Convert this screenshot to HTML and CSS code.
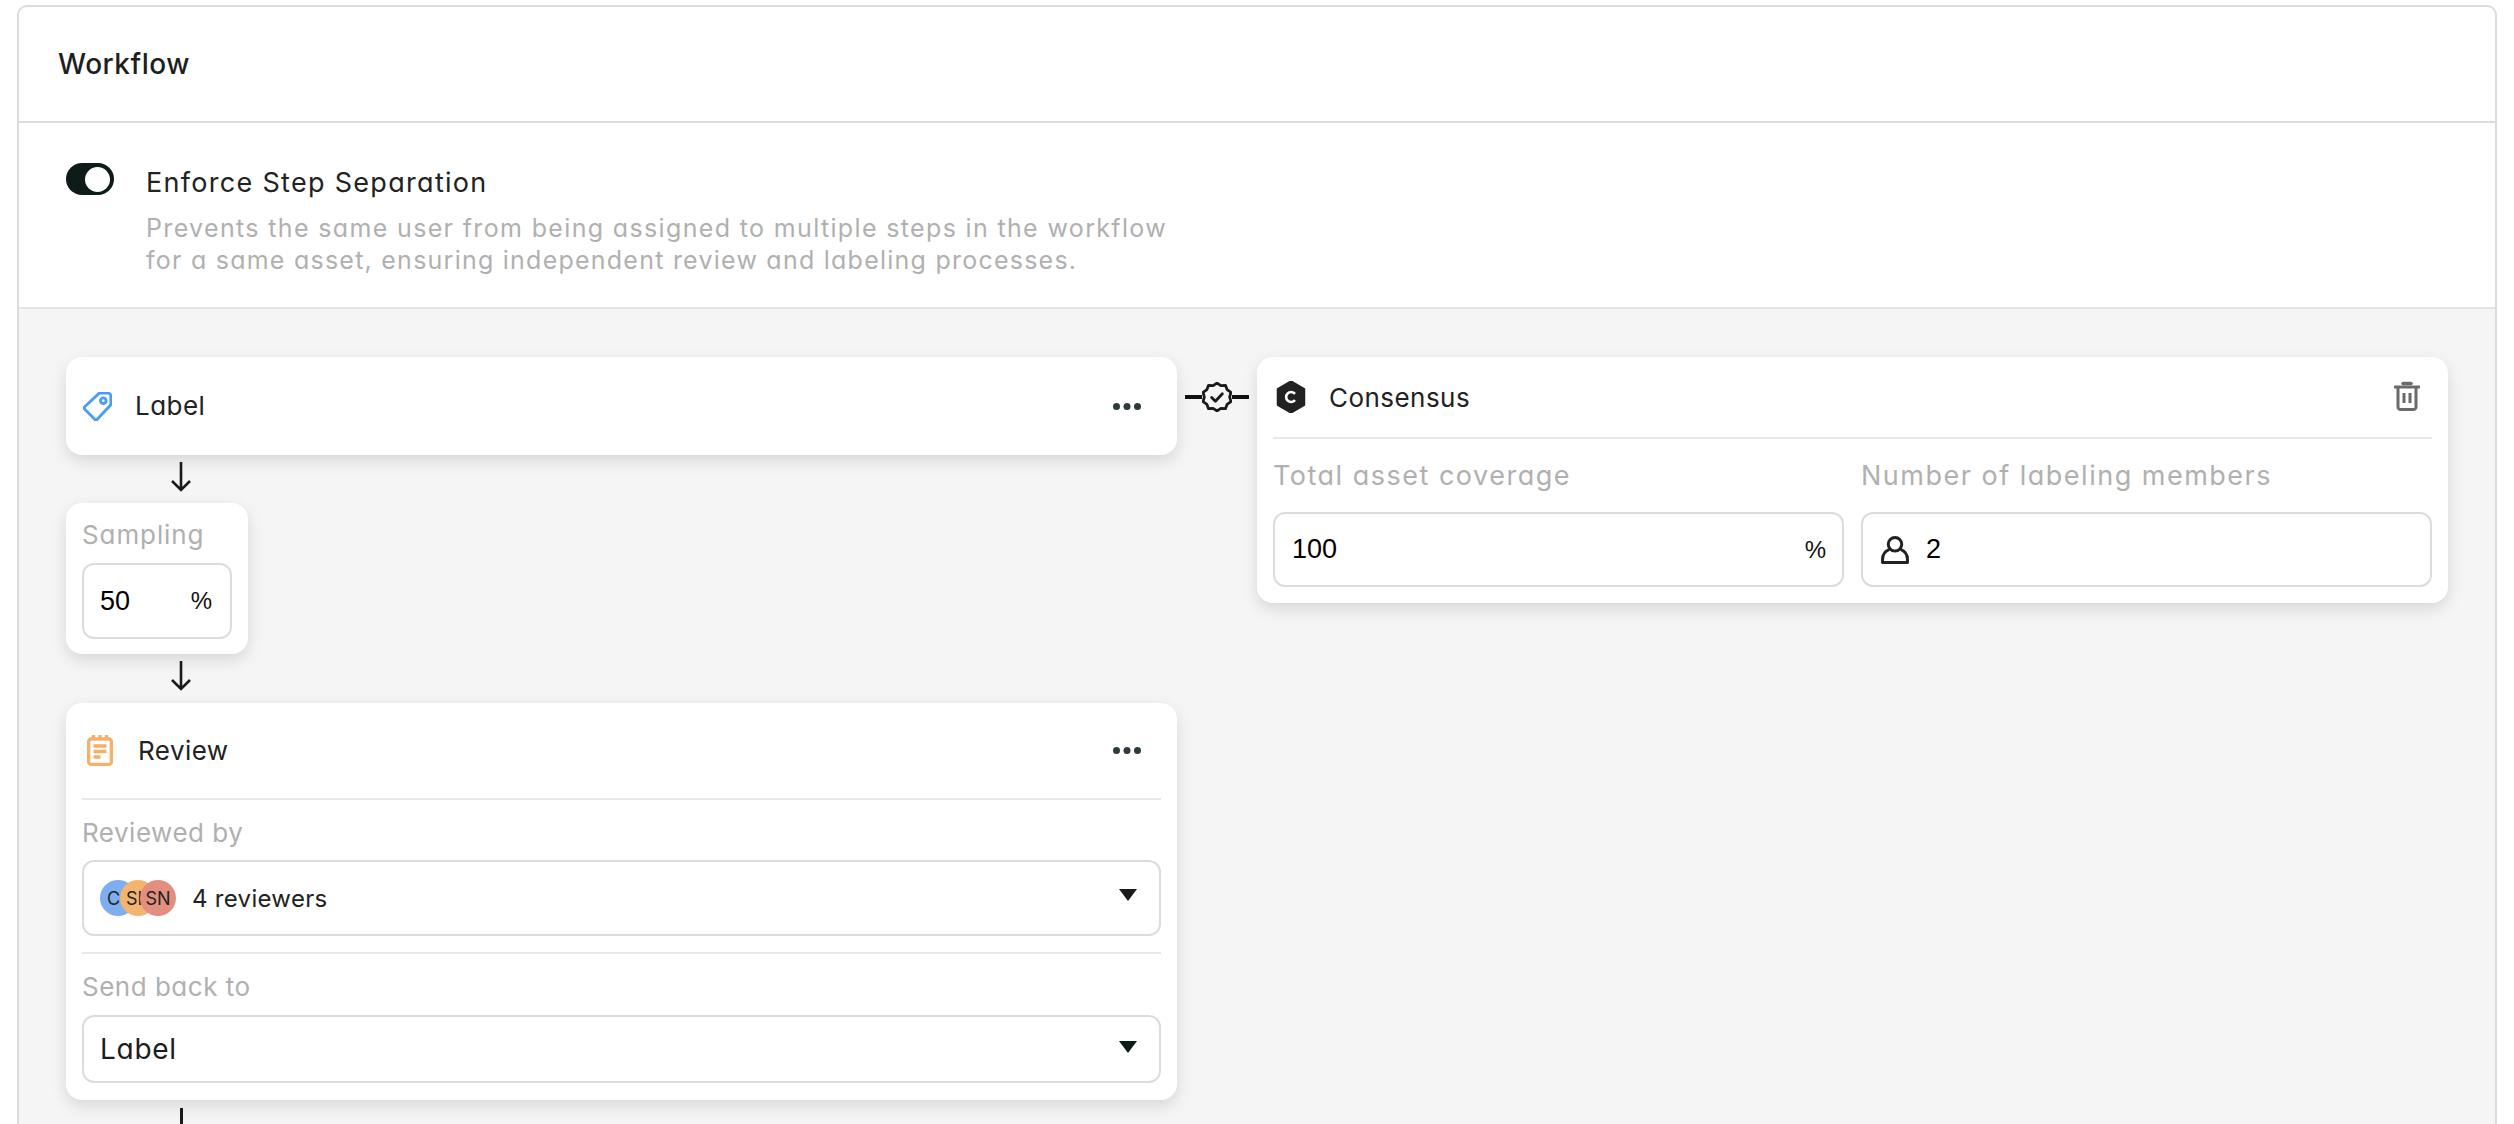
FILE: index.html
```html
<!DOCTYPE html>
<html lang="en">
<head>
<meta charset="utf-8">
<title>Workflow</title>
<link rel="stylesheet" href="styles.css">
</head>
<body>
<section class="panel">
  <header class="panel-head">Workflow</header>
  <div class="separation">
    <span class="toggle"><span class="knob"></span></span>
    <div class="sep-text">
      <div class="sep-title">Enforce Step Separation</div>
      <p class="sep-desc">Prevents the same user from being assigned to multiple steps in the workflow<br><span class="sep-line">for a same asset, ensuring independent review and labeling processes.</span></p>
    </div>
  </div>
  <div class="canvas">
    <div class="col-left">
      <div class="card step-label">
        <svg class="icon-tag" viewBox="1.500 1.500 25 25" width="29" height="29" fill="none" stroke="#4a9df5" stroke-width="2.500" stroke-linejoin="round"><path d="M15.500 2.500h7.500a2.500 2.500 0 0 1 2.500 2.500v7.500L13.800 25a1.500 1.500 0 0 1-2.200 0L3 16.400a1.500 1.500 0 0 1 0-2.200z"/><circle cx="19" cy="9" r="2.400"/></svg>
        <span class="step-name">Label</span>
        <svg class="dots" viewBox="0 0 28 7" width="28" height="7" fill="#2f3a3d"><circle cx="3.500" cy="3.500" r="3.500"/><circle cx="14" cy="3.500" r="3.500"/><circle cx="24.500" cy="3.500" r="3.500"/></svg>
      </div>
      <svg class="arrow" viewBox="0 0 24 30" width="24" height="30" fill="none" stroke="#1a1a1a" stroke-width="2.600"><path d="M12 0v28M3 19l9 9 9-9"/></svg>
      <div class="card sampling">
        <div class="field-label field-sampling">Sampling</div>
        <div class="input input-small"><span class="value">50</span><span class="unit">%</span></div>
      </div>
      <svg class="arrow arrow-low" viewBox="0 0 24 30" width="24" height="30" fill="none" stroke="#1a1a1a" stroke-width="2.600"><path d="M12 0v28M3 19l9 9 9-9"/></svg>
      <div class="card review">
        <div class="review-head">
          <svg class="icon-note" viewBox="0 0 26 31" width="26" height="31" fill="none" stroke="#f5b06c" stroke-width="3.300"><rect x="1.650" y="4" width="22.700" height="25.350" rx="2.500"/><path d="M6.500 0v5M13 0v5M19.500 0v5M6.500 11h13M6.500 16.500h13M6.500 22h7"/></svg>
          <span class="step-name">Review</span>
          <svg class="dots" viewBox="0 0 28 7" width="28" height="7" fill="#2f3a3d"><circle cx="3.500" cy="3.500" r="3.500"/><circle cx="14" cy="3.500" r="3.500"/><circle cx="24.500" cy="3.500" r="3.500"/></svg>
        </div>
        <div class="review-block">
          <div class="field-label">Reviewed by</div>
          <div class="input select select-tall">
            <span class="avatars">
              <span class="avatar av-blue">C</span>
              <span class="avatar av-orange">SI</span>
              <span class="avatar av-red">SN</span>
            </span>
            <span class="reviewers">4 reviewers</span>
            <span class="caret"></span>
          </div>
        </div>
        <div class="review-block">
          <div class="field-label">Send back to</div>
          <div class="input select select-short">
            <span class="select-value">Label</span>
            <span class="caret caret-short"></span>
          </div>
        </div>
      </div>
      <div class="arrow-stub"></div>
    </div>
    <div class="connector">
      <span class="dash"></span>
      <svg viewBox="1 1 28 28" width="30" height="30" fill="none" stroke="#1a1a1a" stroke-width="2.600" stroke-linejoin="round" stroke-linecap="round"><path d="M15 2l3.600 2.400 4.300-.3 1.500 4 3.600 2.500-1.200 4.400 1.200 4.400-3.600 2.500-1.500 4-4.300-.3L15 28l-3.600-2.400-4.300.3-1.500-4-3.600-2.500 1.200-4.400L2 10.600l3.600-2.500 1.500-4 4.300.3z"/><path d="M10 15.500l3.500 3.500 6.500-7"/></svg>
      <span class="dash"></span>
    </div>
    <div class="card consensus">
      <div class="cons-head">
        <svg class="icon-c" viewBox="0 0 30 32" width="30" height="32"><path d="M15 0l13.500 8v16L15 32 1.500 24V8z" fill="#222" stroke="#222" stroke-linejoin="round" stroke-width="1.500"/><path d="M19 12.800a5 5 0 1 0 0 6.400" fill="none" stroke="#fff" stroke-width="2.600"/></svg>
        <span class="step-name">Consensus</span>
        <svg class="icon-trash" viewBox="0 0 26 30" width="26" height="30" fill="none" stroke="#6b6b6b" stroke-width="3"><path d="M1 6h24" stroke-linecap="round"/><path d="M9 2.500h8" stroke-width="3.500" stroke-linecap="round"/><path d="M4 6v20a2.500 2.500 0 0 0 2.500 2.500h13A2.500 2.500 0 0 0 22 26V6"/><path d="M10 12v10M16 12v10"/></svg>
      </div>
      <div class="cons-grid">
        <div class="cons-field">
          <div class="field-label field-wide">Total asset coverage</div>
          <div class="input input-wide"><span class="value">100</span><span class="unit">%</span></div>
        </div>
        <div class="cons-field">
          <div class="field-label field-wide">Number of labeling members</div>
          <div class="input input-wide input-user">
            <svg class="icon-user" viewBox="0.500 0.500 27 27" width="28" height="28" fill="none" stroke="#222" stroke-width="2.900" stroke-linejoin="round"><circle cx="14" cy="8.500" r="6.500"/><path d="M8.500 13.500C5 15 2 18.500 2 23v3h24v-3c0-4.500-3-8-6.500-9.500"/></svg>
            <span class="value">2</span>
          </div>
        </div>
      </div>
    </div>
  </div>
</section>
</body>
</html>
```

FILE: styles.css
```css
html, body {
  margin: 0;
  height: 1124px;
  overflow: hidden;
  background: #fff;
}
body {
  padding: 5px 0 0 17px;
  box-sizing: border-box;
  font-family: Inter, "Noto Sans", sans-serif;
  font-feature-settings: "cv11" 1;
  color: #222;
}
.panel {
  width: 2480px;
  height: 1200px;
  box-sizing: border-box;
  border: 2px solid #dcdcdc;
  border-radius: 10px 10px 0 0;
  display: flex;
  flex-direction: column;
}
.panel-head {
  height: 116px;
  box-sizing: border-box;
  display: flex;
  align-items: center;
  padding-left: 39px;
  font-size: 28px;
  font-weight: 500;
  color: #1f1f1f;
  border-bottom: 2px solid #dcdcdc;
  letter-spacing: 0.5px;
}
.separation {
  height: 186px;
  box-sizing: border-box;
  display: flex;
  padding: 40px 0 0 47px;
  gap: 32px;
  border-bottom: 2px solid #e4e4e4;
}
.toggle {
  width: 48px;
  height: 32px;
  border-radius: 16px;
  background: #0d1b19;
  display: flex;
  align-items: center;
  justify-content: flex-end;
  padding-right: 4px;
  box-sizing: border-box;
  flex: none;
}
.knob {
  width: 25px;
  height: 25px;
  border-radius: 50%;
  background: #fff;
}
.sep-title {
  font-size: 27px;
  line-height: 36px;
  margin-top: 2px;
  color: #222;
  letter-spacing: 1.3px;
}
.sep-desc {
  margin: 11px 0 0;
  font-size: 25px;
  line-height: 32px;
  color: #b0b0b0;
  letter-spacing: 1.35px;
}
.sep-line { letter-spacing: 1.24px; }
.canvas {
  flex: 1;
  background: #f5f5f5;
  display: flex;
  align-items: flex-start;
  padding: 48px 47px 0;
}
.card {
  background: #fff;
  border-radius: 16px;
  box-shadow: 0 6px 16px rgba(0, 0, 0, 0.12);
  box-sizing: border-box;
}
.col-left {
  width: 1111px;
  flex: none;
  display: flex;
  flex-direction: column;
  align-items: flex-start;
}
.step-label {
  width: 100%;
  height: 98px;
  display: flex;
  align-items: center;
  padding: 0 36px 0 17px;
}
.step-name {
  font-size: 26px;
  color: #222;
  letter-spacing: 0.45px;
}
.icon-tag { flex: none; }
.step-label .step-name { margin-left: 23px; margin-bottom: 1px; }
.dots { margin-left: auto; flex: none; }
.arrow {
  flex: none;
  margin: 7px 0 11px 103px;
  display: block;
}
.arrow-low { margin-bottom: 12px; }
.sampling {
  width: 182px;
  height: 151px;
  padding: 14px 16px 0;
}
.field-label {
  font-size: 26px;
  line-height: 36px;
  color: #b0b0b0;
  letter-spacing: 0.5px;
}
.field-sampling {
  margin-bottom: 10px;
  letter-spacing: 0.9px;
}
.field-wide {
  font-size: 27px;
  letter-spacing: 1.5px;
  margin-bottom: 18px;
}
.input {
  border: 2px solid #dcdcdc;
  border-radius: 12px;
  background: #fff;
  box-sizing: border-box;
  display: flex;
  align-items: center;
}
.input-small {
  height: 76px;
  padding: 0 18px 0 16px;
  justify-content: space-between;
}
.value {
  font-family: "Liberation Sans", Arial, sans-serif;
  font-size: 27px;
  color: #000;
}
.unit {
  font-family: "Liberation Sans", Arial, sans-serif;
  font-size: 24px;
  color: #111;
}
.review {
  width: 100%;
  height: 397px;
  padding: 0 16px;
}
.review-head {
  height: 95px;
  display: flex;
  align-items: center;
  padding: 0 20px 0 5px;
  border-bottom: 2px solid #e8e8e8;
}
.icon-note { flex: none; }
.review-head .step-name { margin-left: 25px; }
.review-block .field-label { padding-top: 15px; }
.select {
  margin-top: 9px;
  padding: 0 22px 0 16px;
}
.select-tall { height: 76px; }
.select-short {
  height: 68px;
  margin-top: 10px;
}
.review-block + .review-block {
  margin-top: 16px;
  border-top: 2px solid #e8e8e8;
}
.avatars {
  display: flex;
  flex: none;
}
.avatar {
  width: 36px;
  height: 36px;
  border-radius: 50%;
  overflow: hidden;
  display: flex;
  align-items: center;
  justify-content: center;
  font-size: 18px;
  color: #222;
  flex: none;
  white-space: nowrap;
}
.avatar + .avatar { margin-left: -16px; }
.av-blue { background: #7eaef0; box-sizing: border-box; justify-content: flex-start; padding-left: 7px; }
.av-orange { background: #f3b46f; box-sizing: border-box; justify-content: flex-start; padding-left: 6px; }
.av-red { background: #e38f80; }
.reviewers {
  margin-left: 16px;
  font-size: 24px;
  color: #222;
  letter-spacing: 0.3px;
}
.select-value {
  font-size: 28px;
  color: #1c1c1c;
  letter-spacing: 0.7px;
}
.caret {
  margin-left: auto;
  margin-bottom: 6px;
  width: 0;
  height: 0;
  border-left: 9px solid transparent;
  border-right: 9px solid transparent;
  border-top: 12px solid #1a1a1a;
}
.caret-short { margin-bottom: 4px; border-top-color: #0d1b19; }
.arrow-stub {
  width: 2.600px;
  height: 24px;
  margin: 8px 0 0 114px;
  background: #1a1a1a;
}
.connector {
  width: 80px;
  flex: none;
  display: flex;
  align-items: center;
  justify-content: center;
  height: 80px;
  box-sizing: border-box;
}
.dash {
  width: 17px;
  height: 4px;
  background: #111;
  flex: none;
}
.consensus {
  flex: 1;
  height: 246px;
  padding: 0 16px;
}
.cons-head {
  height: 80px;
  display: flex;
  align-items: center;
  border-bottom: 2px solid #e8e8e8;
  padding: 0 12px 0 3px;
}
.cons-head .step-name { margin-left: 23px; }
.icon-c { flex: none; }
.icon-trash { margin-left: auto; margin-bottom: 2px; flex: none; }
.cons-grid {
  display: grid;
  grid-template-columns: 1fr 1fr;
  column-gap: 17px;
  padding-top: 19px;
}
.input-wide {
  height: 75px;
  padding: 0 16px 0 17px;
  justify-content: space-between;
}
.input-user {
  justify-content: flex-start;
  padding-left: 18px;
  gap: 17px;
}
```
